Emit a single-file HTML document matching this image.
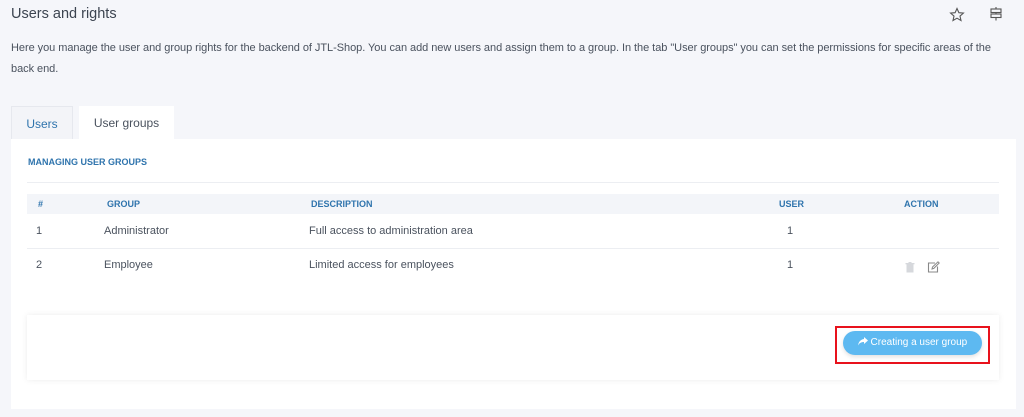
<!DOCTYPE html>
<html><head><style>
*{margin:0;padding:0;box-sizing:border-box}
body{width:1024px;height:417px;background:#f5f6fa;font-family:"Liberation Sans",sans-serif;color:#525a66;position:relative;overflow:hidden}
.a{position:absolute}
h1{position:absolute;left:11px;top:6px;font-size:14.5px;font-weight:normal;color:#3c4450}
.desc{left:11px;top:38px;width:1005px;font-size:11px;line-height:21px;color:#4a525e;letter-spacing:-0.05px}
.tab{top:106px;height:34px;font-size:12px;line-height:34px;text-align:center}
.card{left:11px;top:139px;width:1005px;height:270px;background:#fff}
.th{font-size:9px;font-weight:bold;color:#2f74ad}
.td{font-size:11px;color:#4a525e}
</style></head><body>
<h1>Users and rights</h1>
<svg class="a" style="left:949px;top:7px" width="16" height="16" viewBox="0 0 16 16"><path d="M8 1.5l1.9 4.2 4.5.4-3.4 3 1 4.4L8 11.2 4 13.5l1-4.4-3.4-3 4.5-.4z" fill="none" stroke="#555" stroke-width="1.1"/></svg>
<svg class="a" style="left:989px;top:6px" width="14" height="16" viewBox="0 0 14 16"><rect x="2" y="3" width="10" height="3.5" fill="none" stroke="#555" stroke-width="1.1"/><rect x="2" y="8" width="10" height="3.5" fill="none" stroke="#555" stroke-width="1.1"/><path d="M7 1v2M7 6.5v1.5M7 11.5v3" stroke="#555" stroke-width="1.1"/></svg>
<div class="a desc">Here you manage the user and group rights for the backend of JTL-Shop. You can add new users and assign them to a group. In the tab "User groups" you can set the permissions for specific areas of the<br>back end.</div>
<div class="a tab" style="left:11px;width:62px;background:#f3f4f8;border:1px solid #e6e8ee;border-bottom:none;color:#2f74ad">Users</div>
<div class="a tab" style="left:79px;width:95px;background:#fff;color:#4a525e">User groups</div>
<div class="a card"></div>
<div class="a th" style="left:28px;top:157px">MANAGING USER GROUPS</div>
<div class="a" style="left:27px;top:182px;width:972px;height:1px;background:#eceef2"></div>
<div class="a" style="left:27px;top:194px;width:972px;height:20px;background:#f3f5f9"></div>
<div class="a th" style="left:38px;top:199px">#</div>
<div class="a th" style="left:107px;top:199px">GROUP</div>
<div class="a th" style="left:311px;top:199px">DESCRIPTION</div>
<div class="a th" style="left:779px;top:199px">USER</div>
<div class="a th" style="left:904px;top:199px">ACTION</div>
<div class="a td" style="left:36px;top:225px">1</div>
<div class="a td" style="left:104px;top:225px">Administrator</div>
<div class="a td" style="left:309px;top:225px">Full access to administration area</div>
<div class="a td" style="left:787px;top:225px">1</div>
<div class="a" style="left:27px;top:248px;width:972px;height:1px;background:#eceef2"></div>
<div class="a td" style="left:36px;top:259px">2</div>
<div class="a td" style="left:104px;top:259px">Employee</div>
<div class="a td" style="left:309px;top:259px">Limited access for employees</div>
<div class="a td" style="left:787px;top:259px">1</div>
<svg class="a" style="left:905px;top:262px" width="10" height="11" viewBox="0 0 10 11"><rect x="1.5" y="2" width="7" height="8.5" fill="#d6d8dc"/><rect x="0.5" y="1" width="9" height="1.3" fill="#d6d8dc"/><rect x="3.5" y="0" width="3" height="1.2" fill="#d6d8dc"/></svg>
<svg class="a" style="left:927px;top:261px" width="13" height="12" viewBox="0 0 13 12"><path d="M8 2H1.5v9h9V5.5" fill="none" stroke="#888" stroke-width="1.1"/><path d="M5 8l.5-2L11 .8l1.2 1.2L6.8 7.4z" fill="none" stroke="#888" stroke-width="1"/></svg>
<div class="a" style="left:27px;top:315px;width:972px;height:65px;background:#fff;box-shadow:0 0 6px rgba(0,0,0,.08)"></div>
<div class="a" style="left:835px;top:326px;width:155px;height:38px;border:2px solid #e8121c"></div>
<div class="a" style="left:843px;top:331px;width:139px;height:24px;border-radius:12px;background:#5db9f1;box-shadow:0 2px 4px rgba(0,0,0,.12);color:#fff;font-size:10px;line-height:24px;text-align:center"><svg width="10" height="9" viewBox="0 0 10 9" style="vertical-align:-1px"><path d="M6 0l4 3.5L6 7V5C3 5 1.5 6 0 8.5 0.5 5 2.5 2.5 6 2z" fill="#fff"/></svg> Creating a user group</div>
</body></html>
